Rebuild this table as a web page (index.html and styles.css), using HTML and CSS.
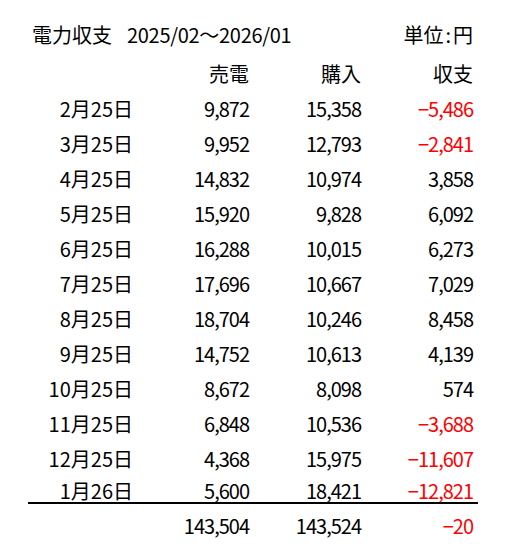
FILE: index.html
```html
<!DOCTYPE html>
<html lang="ja">
<head>
    <meta charset="UTF-8">
    <meta name="viewport" content="width=device-width, initial-scale=1.0">
    <title>電力収支</title>
    <link rel="stylesheet" href="styles.css">
</head>
<body>

    <div class="sheet">
        <!-- Title -->
        <div class="title-row">
            <span class="title">電力収支</span>
            <span class="period">2025/02〜2026/01</span>
            <span class="unit">単位<span class="colon">:</span>円</span>
        </div>

        <!-- Header -->
        <div class="row head">
            <span></span>
            <span>売電</span>
            <span>購入</span>
            <span>収支</span>
        </div>

        <!-- Monthly rows -->
        <div class="row"><span>2月25日</span><span class="num">9,872</span><span class="num">15,358</span><span class="num minus">−5,486</span></div>
        <div class="row"><span>3月25日</span><span class="num">9,952</span><span class="num">12,793</span><span class="num minus">−2,841</span></div>
        <div class="row"><span>4月25日</span><span class="num">14,832</span><span class="num">10,974</span><span class="num">3,858</span></div>
        <div class="row"><span>5月25日</span><span class="num">15,920</span><span class="num">9,828</span><span class="num">6,092</span></div>
        <div class="row"><span>6月25日</span><span class="num">16,288</span><span class="num">10,015</span><span class="num">6,273</span></div>
        <div class="row"><span>7月25日</span><span class="num">17,696</span><span class="num">10,667</span><span class="num">7,029</span></div>
        <div class="row"><span>8月25日</span><span class="num">18,704</span><span class="num">10,246</span><span class="num">8,458</span></div>
        <div class="row"><span>9月25日</span><span class="num">14,752</span><span class="num">10,613</span><span class="num">4,139</span></div>
        <div class="row"><span>10月25日</span><span class="num">8,672</span><span class="num">8,098</span><span class="num">574</span></div>
        <div class="row"><span>11月25日</span><span class="num">6,848</span><span class="num">10,536</span><span class="num minus">−3,688</span></div>
        <div class="row"><span>12月25日</span><span class="num">4,368</span><span class="num">15,975</span><span class="num minus">−11,607</span></div>
        <div class="row last"><span>1月26日</span><span class="num">5,600</span><span class="num">18,421</span><span class="num minus">−12,821</span></div>

        <!-- Total -->
        <div class="row total">
            <span></span>
            <span class="num">143,504</span>
            <span class="num">143,524</span>
            <span class="num minus">−20</span>
        </div>
    </div>

</body>
</html>
```

FILE: styles.css
```css
/* General */
body { margin: 0; background: #fff; color: #000; font-family: "Noto Sans CJK JP", sans-serif; font-size: 20px; }

.sheet { width: 450px; margin: 18px 0 0 28px; }

/* Title */
.title-row { display: flex; align-items: center; box-sizing: border-box; height: 38px; padding: 0 5px 6px 4px; }
.period { margin-left: 15px; letter-spacing: -0.3px; }
.unit { margin-left: auto; }
.colon { margin: 0 2px; }

/* Table rows */
.row { display: grid; grid-template-columns: 105px 116px 112px 112px; height: 35px; line-height: 35px; text-align: right; }
.row.last { height: 26px; line-height: 29px; border-bottom: 2px solid #000; }
.row.total { height: 43px; line-height: 43px; }
.num { letter-spacing: -1px; }
.minus { color: #f00; }
```
